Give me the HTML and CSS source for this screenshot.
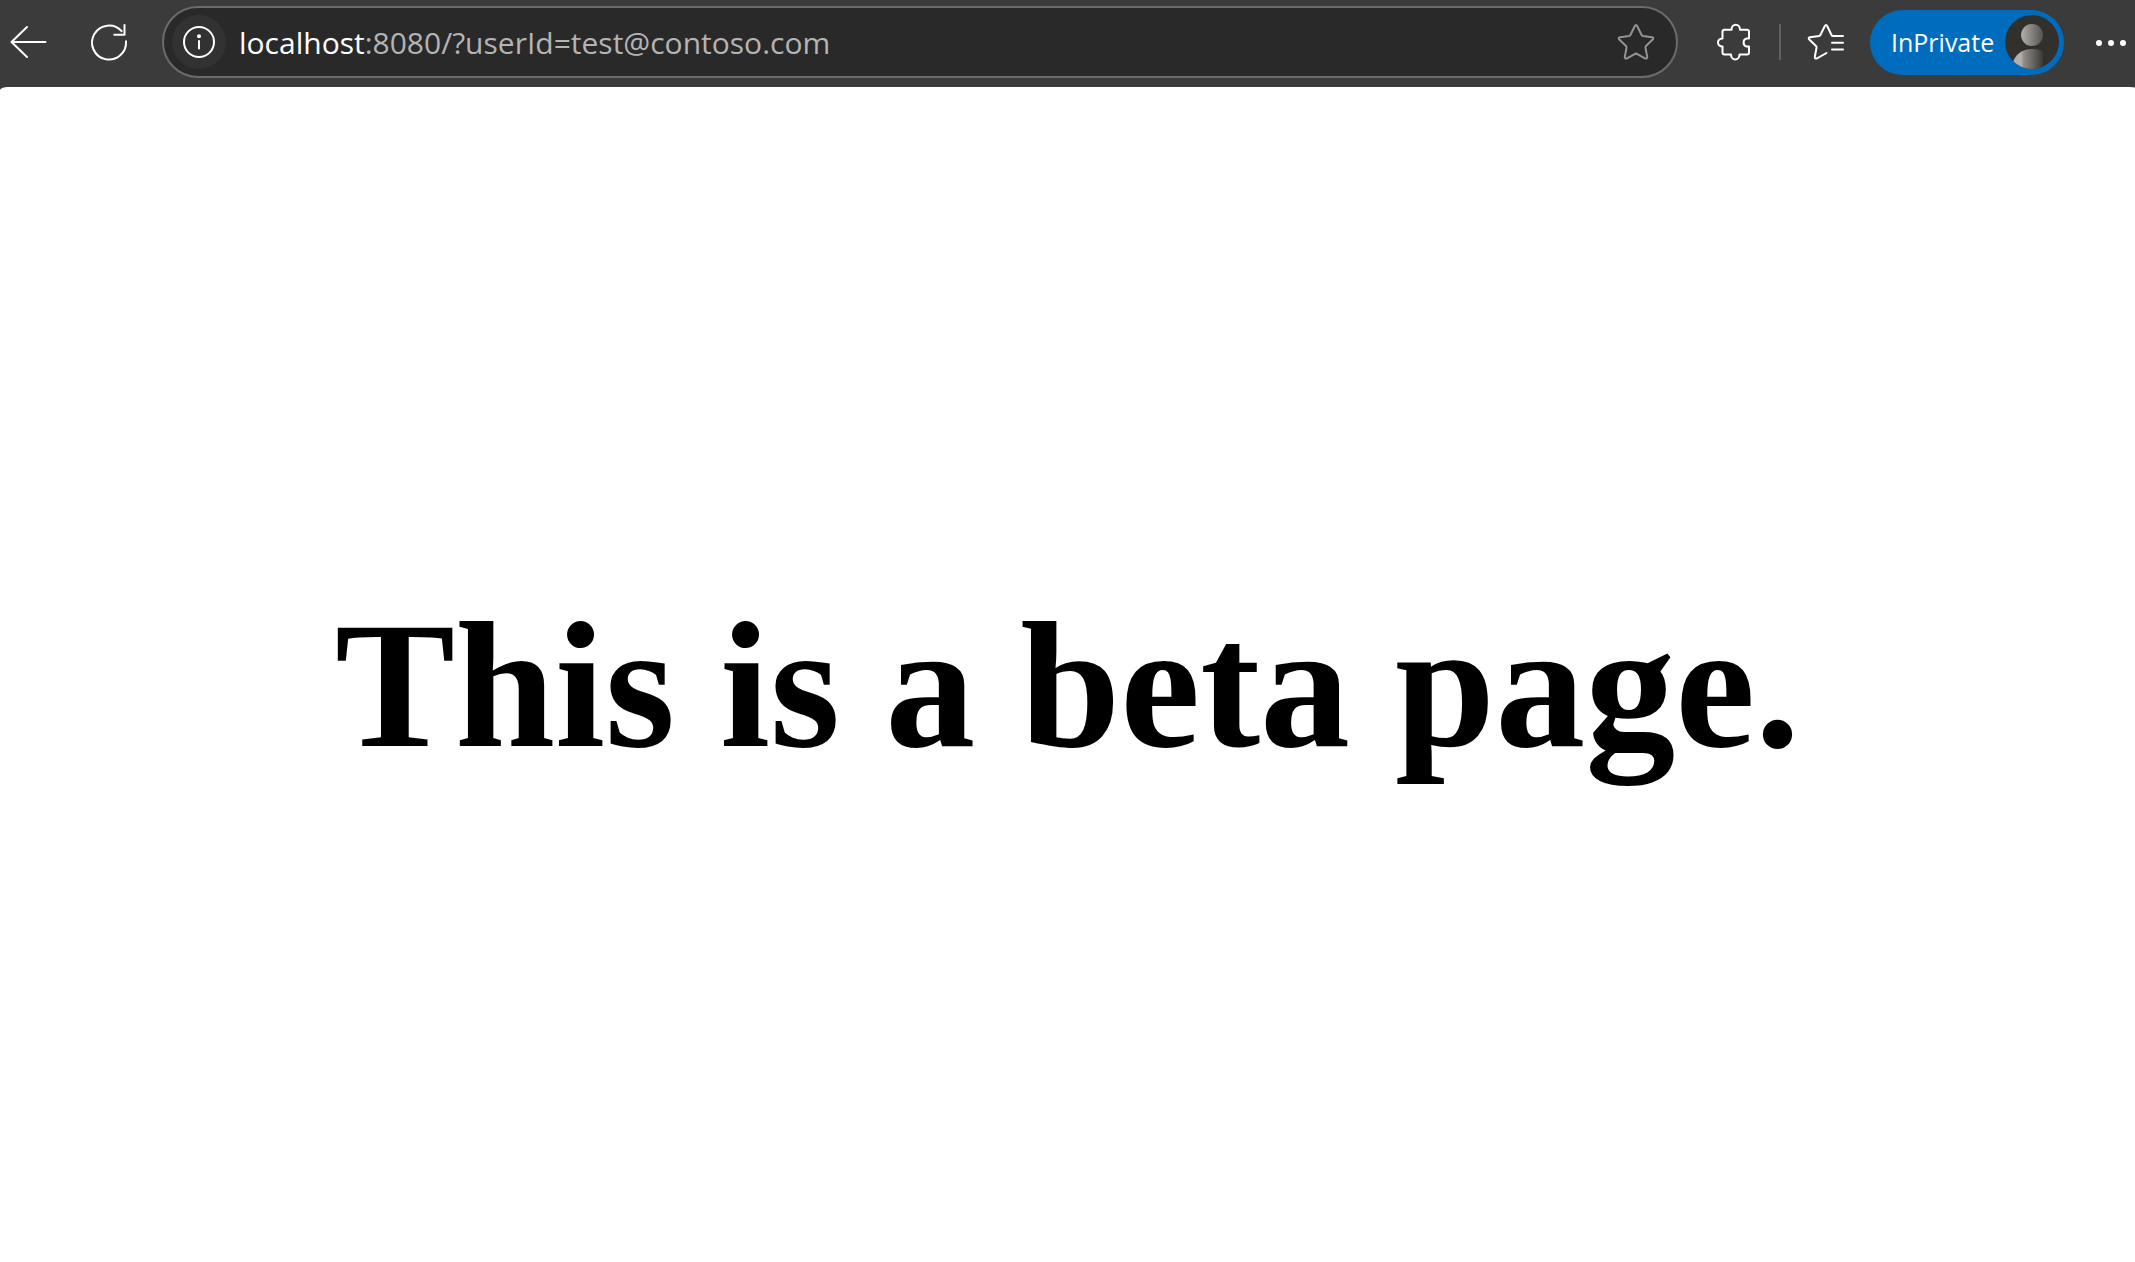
FILE: index.html
```html
<!DOCTYPE html>
<html lang="en">
<head>
<meta charset="utf-8">
<title>Beta page</title>
<link rel="stylesheet" href="styles.css">
</head>
<body>
<header class="toolbar">
  <button class="icon-button" type="button" aria-label="Back">
    <svg class="icon" viewBox="0 0 36 36"><path d="M17 3 1.500 18 17 33M1.500 18H35.500"/></svg>
  </button>
  <button class="icon-button" type="button" aria-label="Refresh">
    <svg class="icon" viewBox="0 0 36 36"><path d="M35 17.500A17 17 0 1 1 30.500 7M33.500 1.200V10.800H23.500" stroke-linecap="square"/></svg>
  </button>
  <form class="address">
    <button class="site-info" type="button" aria-label="View site information">
      <svg class="icon" viewBox="0 0 36 36"><circle cx="18" cy="18" r="15"/><path d="M18 17V24.500"/><circle class="solid" cx="18" cy="12.300" r="2"/></svg>
    </button>
    <label class="host" for="url">localhost</label>
    <input class="url" id="url" type="text" value=":8080/?userId=test@contoso.com" spellcheck="false">
    <button class="icon-button favorite" type="button" aria-label="Add to favorites">
      <svg class="icon" viewBox="0 0 36 36"><path d="M16.700 2.200Q18 0 19.300 2.200L23.500 10.700Q24 11.700 25 11.900L34 13.200Q36.200 13.800 34.700 15.500L28 22Q27.300 22.800 27.500 24L29.200 32.800Q29.300 35.200 27 34.400L18 29.400 9 34.400Q6.700 35.200 6.800 32.800L8.500 24Q8.700 22.800 8 22L1.300 15.500Q-.2 13.800 2 13.200L11 11.900Q12 11.700 12.500 10.700Z"/></svg>
    </button>
  </form>
  <div class="actions">
    <button class="icon-button" type="button" aria-label="Extensions">
      <svg class="icon" viewBox="0 0 36 36"><path d="M7.500 5.800H14.500C14.500-1 23 -1 23 5.800H30Q32 5.800 32 7.800V14.500H29.500A4.200 4.200 0 0 0 29.500 22.500H32V28.500Q32 30.500 30 30.500H22.500C22.500 37 14 37 14 30.500H7.500Q5.500 30.500 5.500 28.500V22.500C-.5 22.500-.5 14.500 5.500 14.500V7.800Q5.500 5.800 7.500 5.800Z"/></svg>
    </button>
    <span class="divider"></span>
    <button class="icon-button" type="button" aria-label="Favorites">
      <svg class="icon" viewBox="0 0 36 36"><path d="M35 12H25Q24 12 23.500 11L19.300 2.200Q18 0 16.700 2.200L12.500 10.700Q12 11.700 11 11.900L2 13.200Q-.2 13.800 1.300 15.500L8 22Q8.700 22.800 8.500 24L6.800 32.800Q6.700 35.200 9 34.400L18.500 29M24 18.700H35M24 25.500H35"/></svg>
    </button>
    <button class="profile" type="button">
      <span>InPrivate</span>
      <svg class="avatar" viewBox="0 0 54 54" aria-hidden="true">
        <defs>
          <linearGradient id="head"><stop offset=".1" stop-color="#aaa6a2"/><stop offset="1" stop-color="#55524f"/></linearGradient>
          <linearGradient id="body"><stop offset=".3" stop-color="#b3afab"/><stop offset=".37" stop-color="#928e8a"/><stop offset="1" stop-color="#3b3936"/></linearGradient>
          <clipPath id="disc"><circle cx="27" cy="27" r="27"/></clipPath>
        </defs>
        <circle cx="27" cy="27" r="27" fill="#32302d"/>
        <circle cx="27" cy="20" r="11" fill="url(#head)"/>
        <path clip-path="url(#disc)" d="M7 50C10 39 17 34 27 34Q34 34 38 36V54H7Z" fill="url(#body)"/>
      </svg>
    </button>
    <button class="icon-button more" type="button" aria-label="Settings and more">
      <svg class="icon" viewBox="0 0 36 36"><g class="solid"><circle cx="9" cy="19" r="3"/><circle cx="21" cy="19" r="3"/><circle cx="33" cy="19" r="3"/></g></svg>
    </button>
  </div>
</header>
<main class="page">
  <h1 class="message">This is a beta page.</h1>
</main>
</body>
</html>
```
FILE: styles.css
```css
* { box-sizing: border-box; }

body {
  margin: 0;
  min-height: 100vh;
  display: flex;
  flex-direction: column;
  background: #3b3b3b;
  font-family: "Open Sans", "Noto Sans", sans-serif;
}

button {
  padding: 0;
  border: 0;
  background: none;
  color: #fff;
  font: inherit;
}

.toolbar {
  display: flex;
  align-items: center;
  gap: 26px;
  padding: 6px 0 9px;
}

.icon-button {
  flex: none;
  display: flex;
  align-items: center;
  justify-content: center;
  width: 55px;
  height: 56px;
}

.icon {
  width: 36px;
  height: 36px;
  overflow: visible;
  fill: none;
  stroke: currentColor;
  stroke-width: 2;
  stroke-linecap: round;
  stroke-linejoin: round;
}

.solid {
  fill: currentColor;
  stroke: none;
}

.address {
  flex: 1;
  min-width: 0;
  display: flex;
  align-items: center;
  height: 72px;
  padding: 0 13px 0 8px;
  border: 2px solid #6b6b6b;
  border-radius: 36px;
  background: #292929;
  font-size: 30px;
}

.site-info {
  flex: none;
  display: flex;
  align-items: center;
  justify-content: center;
  width: 54px;
  height: 54px;
  margin-right: 13px;
  border-radius: 50%;
  background: #323232;
}

.host { color: #fff; }

.url {
  flex: 1;
  min-width: 0;
  padding: 0;
  border: 0;
  outline: 0;
  background: none;
  color: #b4b4b4;
  font: inherit;
}

.favorite { color: #929292; }

.actions {
  display: flex;
  align-items: center;
  gap: 17px;
  padding-left: 3px;
}

.divider {
  width: 2px;
  height: 36px;
  background: #616161;
}

.profile {
  display: flex;
  align-items: center;
  justify-content: space-between;
  width: 194px;
  height: 65px;
  padding: 0 5px 0 21px;
  border-radius: 33px;
  background: #006cbe;
  font-size: 25px;
}

.more { width: 54px; }

.avatar {
  width: 54px;
  height: 54px;
}

.page {
  flex: 1;
  display: flex;
  align-items: center;
  justify-content: center;
  padding-top: 22px;
  border-radius: 8px 6px 0 0 / 3px 1px 0 0;
  background: #fff;
}

.message {
  margin: 0;
  color: #000;
  font: bold 180px "Liberation Serif", "Times New Roman", serif;
}
```
